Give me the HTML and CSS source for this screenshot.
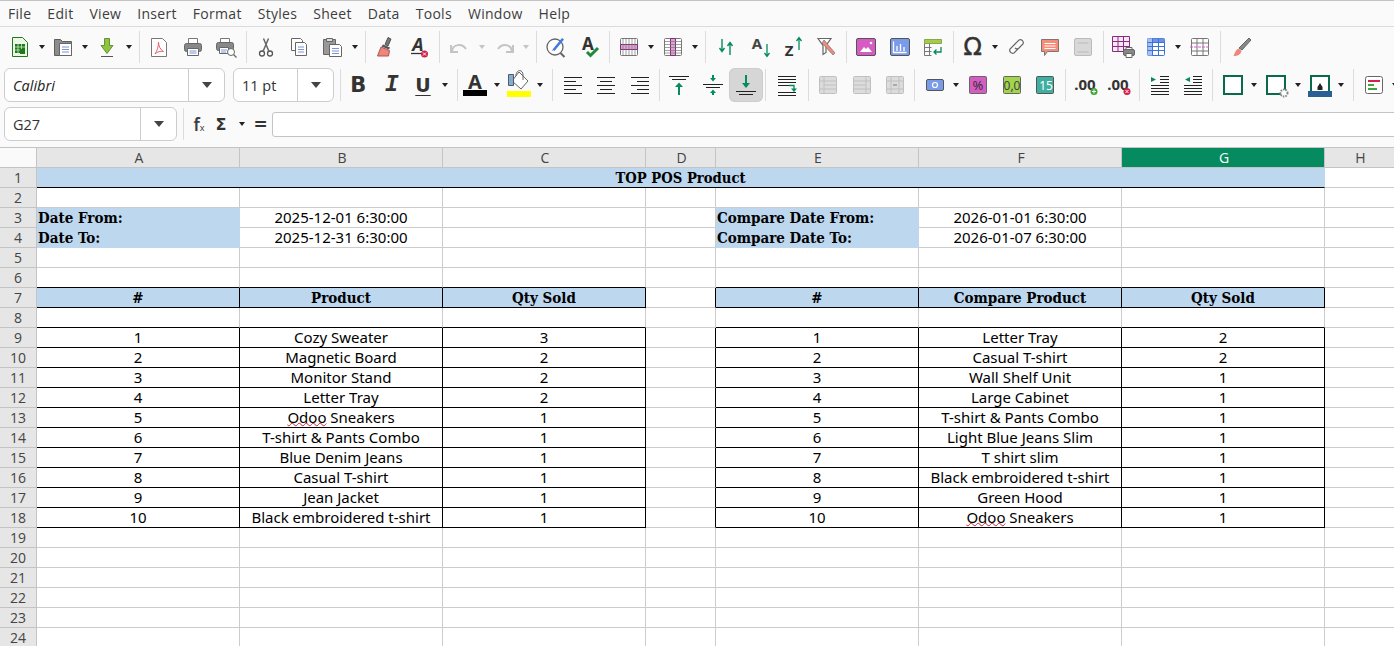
FILE: index.html
```html
<!DOCTYPE html>
<html>

<head>
	<meta http-equiv="Content-Type" content="text/html; charset=utf-8" />
	<title>Calc</title>
	<link rel="stylesheet" href="styles.css">
</head>

<body>
	<nav class="menubar">
		<a>File</a><a>Edit</a><a>View</a><a>Insert</a><a>Format</a><a>Styles</a><a>Sheet</a><a>Data</a><a>Tools</a><a>Window</a><a>Help</a>
	</nav>

	<div class="toolbar row1">
		<span class="btn"><svg viewBox="0 0 24 24"><path d="M4.500 2.500h10l5 5v14h-15z" fill="#eef6e6" stroke="#1d7a1d"/><path d="M7 9h10v9H7z" fill="#1d7a1d"/><path d="M7 12h10M7 15h10M10 9v9M13.500 9v9" stroke="#cfe8c4" stroke-width=".8"/><path d="M12 14h5v5h-5z" fill="#1d7a1d"/></svg></span><span class="dd"></span>
		<span class="btn"><svg viewBox="0 0 24 24"><path d="M3.500 4.500h6l2 2h9v14h-17z" fill="#8c8c8c" stroke="#5e5e5e"/><path d="M8.500 8.500h12v12h-12z" fill="#fff" stroke="#666"/><path d="M11 12h7M11 14.500h7M11 17h7" stroke="#7c93d8"/></svg></span><span class="dd"></span>
		<span class="btn"><svg viewBox="0 0 24 24"><path d="M9.500 3.500h5v7h3.500l-6 8-6-8h3.500z" fill="#8cc63f" stroke="#6b8f35"/><path d="M6 21.500h12" stroke="#555"/></svg></span><span class="dd"></span>
		<span class="sep"></span>
		<span class="btn"><svg viewBox="0 0 24 24"><path d="M4.500 3.500h11l4 4v14h-15z" fill="#fff" stroke="#777"/><path d="M11.500 7c0 4 2 8 5 9.500-3-.5-6 0-8.500 2.500 2-3 3.500-7 3.500-12z" fill="none" stroke="#e8636b"/></svg></span>
		<span class="btn"><svg viewBox="0 0 24 24"><path d="M7.500 9V3.500h9V9" fill="#fff" stroke="#777"/><rect x="3.500" y="8.500" width="17" height="8" rx="2" fill="#888" stroke="#666"/><path d="M6.500 13.500h11v7h-11z" fill="#fff" stroke="#666"/><path d="M8.500 16h7M8.500 18h7" stroke="#7c93d8"/></svg></span>
		<span class="btn"><svg viewBox="0 0 24 24"><path d="M6.500 8V3.500h9V8" fill="#fff" stroke="#777"/><rect x="2.500" y="7.500" width="17" height="8" rx="2" fill="#888" stroke="#666"/><path d="M5.500 12.500h9v6h-9z" fill="#fff" stroke="#666"/><path d="M7 15h6M7 17h5" stroke="#7c93d8"/><circle cx="17" cy="17" r="3.500" fill="#fff" stroke="#666"/><path d="M19.500 19.500l3 3" stroke="#666" stroke-width="1.300"/></svg></span>
		<span class="sep"></span>
		<span class="btn"><svg viewBox="0 0 24 24"><circle cx="8" cy="18.500" r="2.500" fill="none" stroke="#555" stroke-width="1.300"/><circle cx="16" cy="18.500" r="2.500" fill="none" stroke="#555" stroke-width="1.300"/><path d="M9 16.500L14.500 3.500M15 16.500L9.500 3.500" stroke="#666" stroke-width="1.500"/></svg></span>
		<span class="btn"><svg viewBox="0 0 24 24"><path d="M4.500 3.500h9l2 2v10h-11z" fill="#fff" stroke="#666"/><path d="M8.500 7.500h9l2 2v11h-11z" fill="#fff" stroke="#666"/><path d="M11 12h6M11 14.500h6M11 17h6" stroke="#7c93d8"/></svg></span>
		<span class="btn"><svg viewBox="0 0 24 24"><path d="M2.500 4.500h12v15h-12z" fill="#999" stroke="#666"/><path d="M5.500 3.500h6v3h-6z" fill="#ddd" stroke="#666"/><path d="M8.500 9.500h10l2 2v10h-12z" fill="#fff" stroke="#666"/><path d="M11 13.500h7M11 16h7M11 18.500h7" stroke="#7c93d8"/></svg></span><span class="dd"></span>
		<span class="sep"></span>
		<span class="btn"><svg viewBox="0 0 24 24"><path d="M15 2.500l3 1.500-3 7-3-1.500z" fill="#777" stroke="#555"/><path d="M10 9.500l7 3-1 2-7.500-3z" fill="#555"/><path d="M8 12l8.500 3.500-1 5.500H4.500z" fill="#f0857a" stroke="#a55"/></svg></span>
		<span class="btn"><svg viewBox="0 0 24 24"><text x="11" y="16" class="ico-text" font-size="18" font-style="italic" text-anchor="middle" font-weight="700" fill="#333">A</text><path d="M4 18.500h12" stroke="#333" stroke-width="1.300"/><circle cx="17.500" cy="19" r="3.500" fill="#d3234c"/><path d="M16 17.500l3 3M19 17.500l-3 3" stroke="#fff"/></svg></span>
		<span class="sep sep-w"></span>
		<span class="btn"><svg viewBox="0 0 24 24"><path d="M4 16c1-7 10-8 14-2" fill="none" stroke="#c4c4c4" stroke-width="2"/><path d="M3 10v7h7" fill="none" stroke="#c4c4c4" stroke-width="2"/></svg></span><span class="dd off"></span>
		<span class="btn"><svg viewBox="0 0 24 24"><path d="M20 16c-1-7-10-8-14-2" fill="none" stroke="#c4c4c4" stroke-width="2"/><path d="M21 10v7h-7" fill="none" stroke="#c4c4c4" stroke-width="2"/></svg></span><span class="dd off"></span>
		<span class="sep"></span>
		<span class="btn"><svg viewBox="0 0 24 24"><circle cx="11" cy="12" r="8" fill="#fff" stroke="#666" stroke-width="1.300"/><path d="M16.500 18l4 4" stroke="#666" stroke-width="2"/><path d="M8.500 14.500L18 3l2 1.500-9.500 11.500z" fill="#3f7be0"/><path d="M8.500 14.500l-1 2 2-1z" fill="#e8a"/></svg></span>
		<span class="btn"><svg viewBox="0 0 24 24"><text x="10" y="15" class="ico-text" font-size="17" text-anchor="middle" font-weight="700" fill="#333">A</text><path d="M9 17l3.500 3.500L20 13" fill="none" stroke="#1c8a3a" stroke-width="3"/></svg></span>
		<span class="sep"></span>
		<span class="btn"><svg viewBox="0 0 24 24"><rect x="3.500" y="3.500" width="17" height="17" rx="1" fill="#fff" stroke="#777"/><path d="M3.500 9.500h17v5h-17z" fill="#d9a8d0" stroke="#8c2a80"/><path d="M9 3.500v17M12 3.500v17M15 3.500v17M18 3.500v17M6 3.500v17" stroke="#777" stroke-width=".7"/></svg></span><span class="dd"></span>
		<span class="btn"><svg viewBox="0 0 24 24"><rect x="3.500" y="3.500" width="17" height="17" rx="1" fill="#fff" stroke="#777"/><path d="M9.500 3.500h5v17h-5z" fill="#d9a8d0" stroke="#8c2a80"/><path d="M3.500 6.500h17M3.500 9.500h17M3.500 12.500h17M3.500 15.500h17M3.500 18h17" stroke="#777" stroke-width=".7"/></svg></span><span class="dd"></span>
		<span class="sep sep-w"></span>
		<span class="btn"><svg viewBox="0 0 24 24"><path d="M8 4v12M5.500 13l2.500 3.500 2.500-3.500" fill="none" stroke="#068a5f" stroke-width="1.400"/><path d="M16 20V8M13.500 11L16 7.500l2.500 3.500" fill="none" stroke="#068a5f" stroke-width="1.400"/></svg></span>
		<span class="btn"><svg viewBox="0 0 24 24"><text x="9" y="14" class="ico-text" font-size="15" text-anchor="middle" font-weight="700" fill="#444">A</text><path d="M19 9v12M16.500 18l2.500 3.500 2.500-3.500" fill="none" stroke="#068a5f" stroke-width="1.300"/></svg></span>
		<span class="btn"><svg viewBox="0 0 24 24"><text x="8" y="21" class="ico-text" font-size="15" text-anchor="middle" font-weight="700" fill="#333">Z</text><path d="M18 3v12M15.500 6L18 2.500 20.500 6" fill="none" stroke="#068a5f" stroke-width="1.300"/></svg></span>
		<span class="btn"><svg viewBox="0 0 24 24"><path d="M3 3.500h13l-5 7v7l-3 2v-9z" fill="#fff" stroke="#666" stroke-width="1.200"/><path d="M9 5l11 13-2 2L7 8z" fill="#f08a7a" stroke="#777" stroke-width=".7"/></svg></span>
		<span class="sep"></span>
		<span class="btn"><svg viewBox="0 0 24 24"><rect x="2.500" y="3.500" width="19" height="17" rx="1.500" fill="#d65cc4" stroke="#555"/><path d="M6 17l4-5 2 2 2-2 4 5z" fill="#fff"/><circle cx="17" cy="8" r="1.300" fill="#fff"/></svg></span>
		<span class="btn"><svg viewBox="0 0 24 24"><rect x="2.500" y="3.500" width="19" height="17" rx="1.500" fill="#7a9be8" stroke="#555"/><path d="M5.500 6.500v11h13M9 16v-5M12.500 16V9M16 16v-4" fill="none" stroke="#fff" stroke-width="1.300"/></svg></span>
		<span class="btn"><svg viewBox="0 0 24 24"><path d="M3.500 4.500h17v4h-17z" fill="#a2cc4a" stroke="#8aa84a"/><path d="M3.500 8.500v12h7M3.500 12.500h7M3.500 16.500h7M8.500 8.500v12" fill="none" stroke="#777"/><path d="M20 12v5h-7M15.500 14.500L13 17l2.500 2.500" fill="none" stroke="#068a5f" stroke-width="1.300"/></svg></span>
		<span class="sep"></span>
		<span class="btn omega">Ω</span><span class="dd"></span>
		<span class="btn"><svg viewBox="0 0 24 24"><path d="M10.500 13.500l6-6a3 3 0 0 1 4 4l-4 4a3 3 0 0 1-4 0M13.500 10.500l-6 6a3 3 0 0 0 4 4l4-4" fill="none" stroke="#666" stroke-width="1.200" transform="translate(-1.500 -2.500)"/></svg></span>
		<span class="btn"><svg viewBox="0 0 24 24"><path d="M3.500 4.500h17v12h-11l-3 4v-4h-3z" fill="#f88c79" stroke="#777"/><path d="M6.500 8.500h11M6.500 11h11M6.500 13.500h11" stroke="#fff"/></svg></span>
		<span class="btn"><svg viewBox="0 0 24 24"><rect x="3.500" y="3.500" width="17" height="17" rx="1.500" fill="#d8d8d8" stroke="#bbb"/><path d="M6.500 8h11M6.500 17h11" stroke="#bbb"/></svg></span>
		<span class="sep"></span>
		<span class="btn"><svg viewBox="0 0 24 24"><path d="M1.500 1.500h17v15h-17zM1.500 6.500h17M1.500 11.500h17M7 1.500v15M12.500 1.500v15" fill="#f5e8f3" stroke="#8c2a80"/><rect x="12.500" y="14.500" width="11" height="6" rx="1.500" fill="#888" stroke="#666"/><path d="M15 12.500h6v2h-6zM15 18.500h6v4h-6z" fill="#fff" stroke="#666"/></svg></span>
		<span class="btn"><svg viewBox="0 0 24 24"><rect x="3.500" y="3.500" width="17" height="17" rx="1" fill="#fff" stroke="#3f6fd8"/><path d="M3.500 3.500h17v4h-17z" fill="#6a93e8"/><path d="M3.500 3.500h5v17h-5z" fill="#a9c1f0"/><path d="M3.500 7.500h17M3.500 11.500h17M3.500 15.500h17M8.500 3.500v17M14.500 3.500v17" stroke="#3f6fd8"/></svg></span><span class="dd"></span>
		<span class="btn"><svg viewBox="0 0 24 24"><rect x="3.500" y="3.500" width="17" height="17" rx="1" fill="#fff" stroke="#777"/><path d="M3.500 8h17M3.500 16h17M9 3.500v17M15 3.500v17" stroke="#777"/><path d="M2 12h20" stroke="#d65cc4" stroke-width="1.200" stroke-dasharray="3 1"/></svg></span>
		<span class="sep sep-w"></span>
		<span class="btn"><svg viewBox="0 0 24 24"><path d="M20 3l2 2-9 10-3-2z" fill="#888" stroke="#666"/><path d="M9.500 13.500l3 2.500c-1 4-4 5-8 5 1-2 2-6 5-7.500z" fill="#f0857a"/></svg></span>
	</div>

	<div class="toolbar row2">
		<span class="combo font-combo"><i class="font-name">Calibri</i><span class="arrow"></span></span>
		<span class="combo size-combo"><span>11 pt</span><span class="arrow"></span></span>
		<span class="sep"></span>
		<span class="btn fmt bold">B</span>
		<span class="btn fmt italic">I</span>
		<span class="btn fmt under">U</span><span class="dd"></span>
		<span class="sep"></span>
		<span class="btn font-color"><svg viewBox="0 0 24 24"><text x="12" y="16" class="ico-text" font-size="20" text-anchor="middle" font-weight="700" fill="#333">A</text><path d="M0 17h24v6H0z" fill="#000"/></svg></span><span class="dd"></span>
		<span class="btn"><svg viewBox="0 0 24 24"><path d="M12-1l9 9-7 8-9-8z" fill="#fff" stroke="#666"/><path d="M9 3c0-7 7-7 7-1v5" fill="none" stroke="#666"/><path d="M1.500 1.500h5v11h-5z" fill="#7fb0c8" stroke="#557"/><path d="M0 18h24v6H0z" fill="#ff0"/></svg></span><span class="dd"></span>
		<span class="sep"></span>
		<span class="btn"><svg viewBox="0 0 24 24"><path d="M3 4.500h18M3 8.500h12M3 12.500h18M3 16.500h12M3 20.500h18" stroke="#222"/></svg></span>
		<span class="btn"><svg viewBox="0 0 24 24"><path d="M3 4.500h18M6 8.500h12M3 12.500h18M6 16.500h12M3 20.500h18" stroke="#222"/></svg></span>
		<span class="btn"><svg viewBox="0 0 24 24"><path d="M3 4.500h18M9 8.500h12M3 12.500h18M9 16.500h12M3 20.500h18" stroke="#222"/></svg></span>
		<span class="sep"></span>
		<span class="btn"><svg viewBox="0 0 24 24"><path d="M2 3.500h20M5 6.500h14" stroke="#222"/><path d="M12 22V13" stroke="#068a5f" stroke-width="2"/><path d="M8 14l4-4.500 4 4.500z" fill="#068a5f"/></svg></span>
		<span class="btn"><svg viewBox="0 0 24 24"><path d="M2 11.500h20M5 14.500h14" stroke="#222"/><path d="M12 2v4M12 18v4" stroke="#068a5f" stroke-width="2"/><path d="M9 5h6l-3 3.500zM9 20h6l-3-3.500z" fill="#068a5f"/></svg></span>
		<span class="btn active"><svg viewBox="0 0 24 24"><path d="M2 18.500h20M5 21.500h14" stroke="#222"/><path d="M12 2v9" stroke="#068a5f" stroke-width="2"/><path d="M8 10h8l-4 5z" fill="#068a5f"/></svg></span>
		<span class="sep"></span>
		<span class="btn wrap"><svg viewBox="0 0 24 24"><path d="M3 3.500h18M3 6.500h18M3 9.500h18M3 19.500h18M3 22.500h18M3 12.500h11" stroke="#222"/><path d="M14 12.500h5v4" fill="none" stroke="#068a5f" stroke-width="1.300"/><path d="M16 15.500h6l-3 3.500z" fill="#068a5f"/></svg></span>
		<span class="sep"></span>
		<span class="btn"><svg viewBox="0 0 24 24"><rect x="3.500" y="3.500" width="17" height="17" rx="1" fill="#dcdcdc" stroke="#c0c0c0"/><path d="M3.500 8h17M3.500 16h17M8 3.500v17M8 12h12.500" stroke="#c0c0c0"/></svg></span>
		<span class="btn"><svg viewBox="0 0 24 24"><rect x="3.500" y="3.500" width="17" height="17" rx="1" fill="#dcdcdc" stroke="#c0c0c0"/><path d="M3.500 8h17M3.500 16h17M16 3.500v17M3.500 12h12.500" stroke="#c0c0c0"/></svg></span>
		<span class="btn"><svg viewBox="0 0 24 24"><rect x="3.500" y="3.500" width="17" height="17" rx="1" fill="#dcdcdc" stroke="#c0c0c0"/><path d="M3.500 8h17M3.500 16h17M8 3.500v17M16 3.500v17" stroke="#c0c0c0"/><path d="M10 12h4" stroke="#aaa" stroke-width="2"/></svg></span>
		<span class="sep"></span>
		<span class="btn"><svg viewBox="0 0 24 24"><rect x="3.500" y="6.500" width="17" height="11" rx="1.500" fill="#7a9be8" stroke="#555"/><circle cx="12" cy="12" r="2.500" fill="none" stroke="#fff" stroke-width="1.200"/></svg></span><span class="dd"></span>
		<span class="btn"><svg viewBox="0 0 24 24"><rect x="3.500" y="3.500" width="17" height="17" rx="1" fill="#d65cc4" stroke="#666"/><text x="12" y="17" class="ico-text" font-size="13" text-anchor="middle" fill="#333">%</text></svg></span>
		<span class="btn"><svg viewBox="0 0 24 24"><rect x="3.500" y="3.500" width="17" height="17" rx="1" fill="#a2d44c" stroke="#666"/><text x="12" y="17" class="ico-text" font-size="12" text-anchor="middle" fill="#444">0,0</text></svg></span>
		<span class="btn"><svg viewBox="0 0 24 24"><rect x="3.500" y="3.500" width="17" height="17" rx="1" fill="#3fb0a0" stroke="#555"/><text x="13" y="17" class="ico-text" font-size="12" text-anchor="middle" fill="#fff">15</text></svg></span>
		<span class="sep sep-w"></span>
		<span class="btn"><svg viewBox="0 0 24 24"><text x="10" y="17" class="ico-text" font-size="15" text-anchor="middle" font-weight="700" fill="#333">.00</text><circle cx="19" cy="18.500" r="3.500" fill="#3fa63a"/><path d="M19 16.500v4M17 18.500h4" stroke="#fff"/></svg></span>
		<span class="btn"><svg viewBox="0 0 24 24"><text x="10" y="17" class="ico-text" font-size="15" text-anchor="middle" font-weight="700" fill="#333">.00</text><circle cx="19" cy="18.500" r="3.500" fill="#d3234c"/><path d="M17.500 17l3 3M20.500 17l-3 3" stroke="#fff"/></svg></span>
		<span class="sep"></span>
		<span class="btn"><svg viewBox="0 0 24 24"><path d="M12 3.500h9M12 6.500h9M12 9.500h9M3 12.500h18M3 15.500h18M3 18.500h18M3 21.500h18" stroke="#222"/><path d="M3 4l5 2.500L3 9z" fill="#068a5f"/></svg></span>
		<span class="btn"><svg viewBox="0 0 24 24"><path d="M12 3.500h9M12 6.500h9M12 9.500h9M3 12.500h18M3 15.500h18M3 18.500h18M3 21.500h18" stroke="#222"/><path d="M9 4L4 6.500 9 9z" fill="#068a5f"/></svg></span>
		<span class="sep"></span>
		<span class="btn"><svg viewBox="0 0 24 24"><rect x="3" y="3" width="18" height="18" fill="#fff" stroke="#0a6b4a" stroke-width="2"/></svg></span><span class="dd"></span>
		<span class="btn"><svg viewBox="0 0 24 24"><rect x="3" y="3" width="18" height="18" fill="#fff" stroke="#0a6b4a" stroke-width="2"/><circle cx="20" cy="20" r="3.500" fill="#fff" stroke="#888" stroke-width="2" stroke-dasharray="1.500 1"/></svg></span><span class="dd"></span>
		<span class="btn"><svg viewBox="0 0 24 24"><path d="M3 18V3h18v15" fill="#fff" stroke="#0a6b4a" stroke-width="2"/><path d="M12 10l2.500 4v3h-5v-3z" fill="#222"/><path d="M0 18h24v6H0z" fill="#2a5f95"/></svg></span><span class="dd"></span>
		<span class="sep"></span>
		<span class="btn"><svg viewBox="0 0 24 24"><rect x="3.500" y="3.500" width="17" height="17" rx="2" fill="#fff" stroke="#666"/><path d="M6 8h12" stroke="#d3234c" stroke-width="2"/><path d="M6 12h6" stroke="#3fa63a" stroke-width="2"/><path d="M6 16h9" stroke="#3fa63a" stroke-width="2"/></svg></span><span class="dd"></span>
	</div>

	<div class="toolbar row3">
		<span class="combo name-box"><span>G27</span><span class="arrow"></span></span>
		<span class="sep"></span>
		<span class="fx">f<small>x</small></span>
		<span class="sigma">Σ</span><span class="dd"></span>
		<span class="equals">=</span>
		<span class="formula-input"></span>
	</div>

	<div class="sheet">
		<table>
			<colgroup>
				<col class="c-head">
				<col class="c-wide">
				<col class="c-wide">
				<col class="c-wide">
				<col class="c-gap">
				<col class="c-wide">
				<col class="c-wide">
				<col class="c-wide">
				<col class="c-end">
			</colgroup>
			<tr class="head">
				<th></th><th>A</th><th>B</th><th>C</th><th>D</th><th>E</th><th>F</th><th class="picked">G</th><th>H</th>
			</tr>
			<tr><th>1</th><td colspan="7" class="title">TOP POS Product</td><td></td></tr>
			<tr><th>2</th><td></td><td></td><td></td><td></td><td></td><td></td><td></td><td></td></tr>
			<tr><th>3</th><td class="label">Date From:</td><td>2025-12-01 6:30:00</td><td></td><td></td><td class="label">Compare Date From:</td><td>2026-01-01 6:30:00</td><td></td><td></td></tr>
			<tr><th>4</th><td class="label">Date To:</td><td>2025-12-31 6:30:00</td><td></td><td></td><td class="label">Compare Date To:</td><td>2026-01-07 6:30:00</td><td></td><td></td></tr>
			<tr><th>5</th><td></td><td></td><td></td><td></td><td></td><td></td><td></td><td></td></tr>
			<tr class="above"><th>6</th><td></td><td></td><td></td><td></td><td></td><td></td><td></td><td></td></tr>
			<tr class="boxed caption"><th>7</th><td>#</td><td>Product</td><td>Qty Sold</td><td></td><td>#</td><td>Compare Product</td><td>Qty Sold</td><td></td></tr>
			<tr class="above"><th>8</th><td></td><td></td><td></td><td></td><td></td><td></td><td></td><td></td></tr>
			<tr class="boxed"><th>9</th><td>1</td><td>Cozy Sweater</td><td>3</td><td></td><td>1</td><td>Letter Tray</td><td>2</td><td></td></tr>
			<tr class="boxed"><th>10</th><td>2</td><td>Magnetic Board</td><td>2</td><td></td><td>2</td><td>Casual T-shirt</td><td>2</td><td></td></tr>
			<tr class="boxed"><th>11</th><td>3</td><td>Monitor Stand</td><td>2</td><td></td><td>3</td><td>Wall Shelf Unit</td><td>1</td><td></td></tr>
			<tr class="boxed"><th>12</th><td>4</td><td>Letter Tray</td><td>2</td><td></td><td>4</td><td>Large Cabinet</td><td>1</td><td></td></tr>
			<tr class="boxed"><th>13</th><td>5</td><td><span class="typo">Odoo</span> Sneakers</td><td>1</td><td></td><td>5</td><td>T-shirt &amp; Pants Combo</td><td>1</td><td></td></tr>
			<tr class="boxed"><th>14</th><td>6</td><td>T-shirt &amp; Pants Combo</td><td>1</td><td></td><td>6</td><td>Light Blue Jeans Slim</td><td>1</td><td></td></tr>
			<tr class="boxed"><th>15</th><td>7</td><td>Blue Denim Jeans</td><td>1</td><td></td><td>7</td><td>T shirt slim</td><td>1</td><td></td></tr>
			<tr class="boxed"><th>16</th><td>8</td><td>Casual T-shirt</td><td>1</td><td></td><td>8</td><td>Black embroidered t-shirt</td><td>1</td><td></td></tr>
			<tr class="boxed"><th>17</th><td>9</td><td>Jean Jacket</td><td>1</td><td></td><td>9</td><td>Green Hood</td><td>1</td><td></td></tr>
			<tr class="boxed"><th>18</th><td>10</td><td>Black embroidered t-shirt</td><td>1</td><td></td><td>10</td><td><span class="typo">Odoo</span> Sneakers</td><td>1</td><td></td></tr>
			<tr><th>19</th><td></td><td></td><td></td><td></td><td></td><td></td><td></td><td></td></tr>
			<tr><th>20</th><td></td><td></td><td></td><td></td><td></td><td></td><td></td><td></td></tr>
			<tr><th>21</th><td></td><td></td><td></td><td></td><td></td><td></td><td></td><td></td></tr>
			<tr><th>22</th><td></td><td></td><td></td><td></td><td></td><td></td><td></td><td></td></tr>
			<tr><th>23</th><td></td><td></td><td></td><td></td><td></td><td></td><td></td><td></td></tr>
			<tr><th>24</th><td></td><td></td><td></td><td></td><td></td><td></td><td></td><td></td></tr>
		</table>
	</div>
</body>

</html>
```

FILE: styles.css
```css
html,
body {
	height: 100%;
}

body {
	margin: 0;
	overflow: hidden;
	background-color: #fafafa;
	font-family: "Noto Sans", "Open Sans", sans-serif;
	color: #3d3d3d;
}

svg {
	display: block;
	width: 24px;
	height: 24px;
	overflow: visible;
}

.ico-text {
	font-family: "Noto Sans", sans-serif;
}

/* menu */

.menubar {
	display: flex;
	gap: 16px;
	height: 25px;
	padding-left: 8px;
	align-items: center;
	border-top: 1px solid #c4c4c4;
	border-bottom: 1px solid #dcdcdc;
	font-family: "Open Sans", sans-serif;
	font-size: 14px;
	letter-spacing: .3px;
}

/* toolbars */

.toolbar {
	display: flex;
	align-items: center;
	white-space: nowrap;
	overflow: hidden;
}

.row1 {
	height: 39px;
	padding-left: 3px;
}

.row2 {
	height: 34px;
	padding: 2px 0 3px 4px;
}

.row3 {
	height: 34px;
	padding: 2px 0 6px 4px;
}

.btn {
	flex: none;
	display: flex;
	align-items: center;
	justify-content: center;
	width: 33.5px;
	height: 34px;
}

.active {
	background-color: #d6d6d6;
	border-radius: 6px;
	box-shadow: inset 0 0 0 1px #cdcdcd;
}

.font-color {
	margin-left: -2px;
}

.wrap {
	margin: 0 2px 0 1px;
}

.dd {
	flex: none;
	display: flex;
	align-items: center;
	justify-content: center;
	width: 10px;
}

.dd:after {
	content: "";
	border-style: solid;
	border-width: 4px 3.5px 0;
	border-color: #222 transparent transparent;
}

.dd.off:after {
	border-top-color: #c4c4c4;
}

.sep {
	flex: none;
	width: 1px;
	height: 32px;
	margin: 0 2.5px;
	background-color: #dcdcdc;
}

.dd + .sep {
	margin-left: 5.5px;
}

.row2 .dd + .sep {
	margin-left: 7px;
}

.sep-w {
	margin: 0 3.5px;
}

.combo + .sep {
	margin-right: 1px;
}

.combo {
	flex: none;
	display: flex;
	align-items: center;
	justify-content: space-between;
	box-sizing: border-box;
	height: 34px;
	background-color: #fff;
	border: 1px solid #cdcdcd;
	border-radius: 6px;
	padding-left: 8px;
	font-family: "Open Sans", sans-serif;
	font-size: 14.5px;
	color: #333;
}

.font-combo {
	width: 221px;
	margin-right: 8px;
}

.font-name {
	color: #222;
}

.size-combo {
	width: 101px;
	margin-right: 3px;
}

.name-box {
	width: 173px;
	margin-right: 3px;
}

.arrow {
	display: flex;
	align-items: center;
	justify-content: center;
	width: 35px;
	height: 100%;
	border-left: 1px solid #cdcdcd;
}

.arrow:after {
	content: "";
	border-style: solid;
	border-width: 6px 5.5px 0;
	border-color: #444 transparent transparent;
}

.fmt {
	font-family: "DejaVu Sans", sans-serif;
	font-size: 21px;
	line-height: 1;
	color: #333;
}

.bold {
	font-weight: 700;
}

.italic {
	font-family: "Liberation Mono", monospace;
	font-style: italic;
	font-weight: 700;
	font-size: 23px;
}

.under {
	width: 29px;
	margin-right: 2.25px;
	font-size: 19px;
	font-weight: 700;
	text-decoration: underline 1px;
	text-underline-offset: 3px;
}

.omega {
	font-family: "DejaVu Sans", sans-serif;
	font-size: 24px;
	color: #333;
	-webkit-text-stroke: .5px #333;
}

.fx {
	margin-left: 9px;
	width: 14px;
	font-size: 17px;
	font-weight: 600;
}

.fx small {
	font-size: 9px;
	font-weight: 400;
}

.sigma {
	width: 13px;
	margin-left: 8px;
	font-family: "DejaVu Sans", sans-serif;
	font-size: 16px;
	font-weight: 700;
	color: #333;
}

.sigma + .dd {
	margin-left: 8px;
}

.equals {
	width: 14px;
	margin-left: 7px;
	font-family: "DejaVu Sans", sans-serif;
	font-size: 17px;
	font-weight: 700;
	line-height: 1;
	color: #333;
}

.formula-input {
	flex: 1;
	height: 25px;
	box-sizing: border-box;
	margin: 0 -10px 0 4px;
	background-color: #fff;
	border: 1px solid #c4c4c4;
	border-radius: 3px;
}

/* sheet */

.sheet {
	border-top: 1px solid #c4c4c4;
	background-color: #fff;
}

table {
	width: 1394px;
	table-layout: fixed;
	border-collapse: separate;
	border-spacing: 0;
	font-size: 15px;
	line-height: 19px;
	color: #000;
}

.c-head {
	width: 37px;
}

.c-wide {
	width: 203px;
}

.c-gap {
	width: 70px;
}

th,
td {
	box-sizing: border-box;
	height: 20px;
	padding: 0;
	overflow: hidden;
	white-space: nowrap;
	text-align: center;
	border-right: 1px solid #ccc;
	border-bottom: 1px solid #ccc;
}

th {
	background-color: #e6e6e6;
	border-color: #c4c4c4;
	font-family: "Open Sans", sans-serif;
	font-weight: 400;
	font-size: 14px;
	color: #444;
}

.head th {
	padding-left: 2px;
}

.head th:first-child {
	background-color: #fafafa;
}

.head .picked {
	background-color: #068a5f;
	color: #fff;
}

td:last-child,
th:last-child {
	border-right: none;
}

.title,
.label,
.caption td {
	padding-top: 1px;
	line-height: 18px;
	font-family: "DejaVu Serif Condensed", "DejaVu Serif", serif;
	font-stretch: condensed;
	font-weight: 700;
	font-size: 15px;
}

.title {
	background-color: #bdd7ee;
	border-right-color: #bdd7ee;
	border-bottom-color: #000;
	font-size: 14.7px;
}

.label {
	background-color: #bdd7ee;
	border-color: #bdd7ee;
	text-align: left;
	padding-left: 1px;
}

.above td:nth-child(-n+4),
.above td:nth-child(n+6):nth-child(-n+8),
.boxed td:nth-child(-n+4),
.boxed td:nth-child(n+6):nth-child(-n+8) {
	border-bottom-color: #000;
}

.boxed td:nth-child(-n+8) {
	border-right-color: #000;
}

.caption td:nth-child(-n+4),
.caption td:nth-child(n+6):nth-child(-n+8) {
	background-color: #bdd7ee;
}

.typo {
	text-decoration: underline wavy #d4232a 1px;
	text-decoration-skip-ink: none;
	text-underline-offset: -1px;
}
```
